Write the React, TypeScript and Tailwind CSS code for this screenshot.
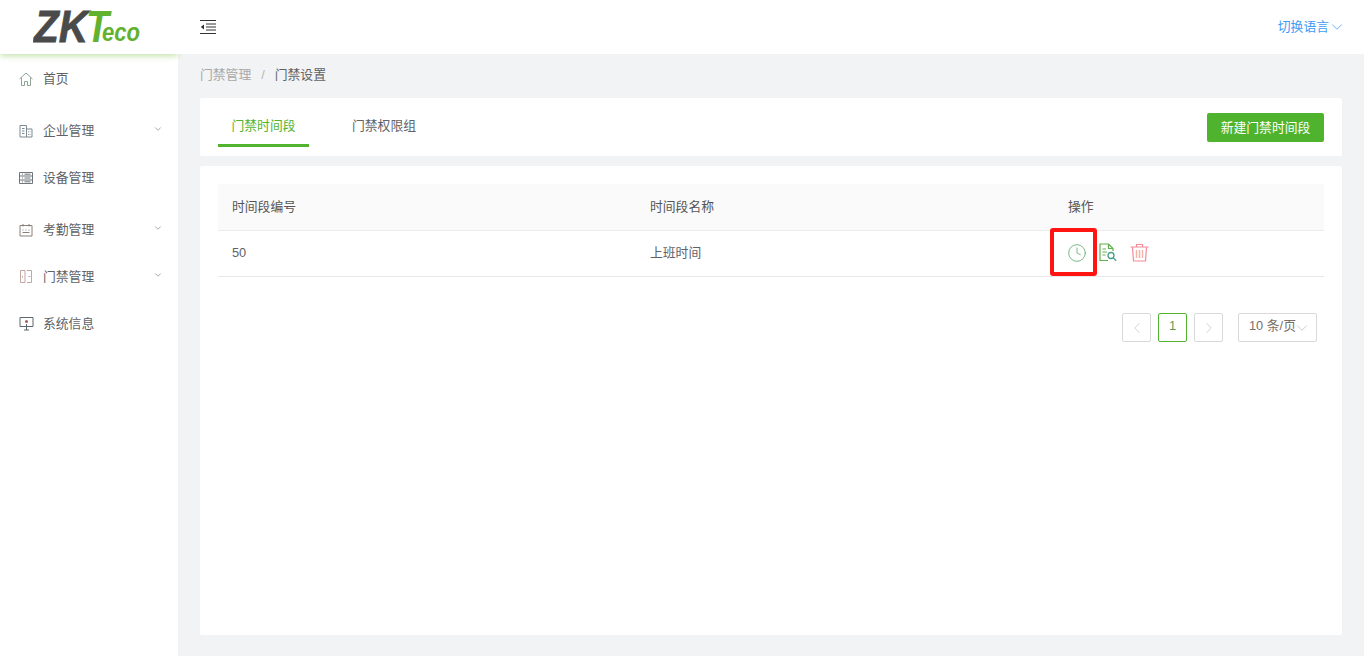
import React from 'react';
import { ChevronDown, ChevronLeft, ChevronRight, Clock } from 'lucide-react';

const FONT = "font-['Liberation_Sans','Noto_Sans_CJK_SC',sans-serif]";

function Logo() {
  return (
    <svg width="114" height="54" viewBox="0 0 114 54" className="block">
      <text fontFamily="Liberation Sans" fontWeight="700" fontStyle="italic">
        <tspan x="1" y="42" fontSize="45" fill="#4a4a4a" stroke="#4a4a4a" strokeWidth="0.8" textLength="54" lengthAdjust="spacingAndGlyphs">ZK</tspan>
        <tspan x="53" y="42" fontSize="45" fill="#63b22f" textLength="23" lengthAdjust="spacingAndGlyphs">T</tspan>
        <tspan x="69" y="41" fontSize="26" fill="#63b22f" textLength="38" lengthAdjust="spacingAndGlyphs">eco</tspan>
      </text>
    </svg>
  );
}

function HomeIcon() {
  return (
    <svg width="14" height="14" viewBox="0 0 14 14" fill="none" stroke="#8fa396" strokeWidth="1">
      <path d="M.5 7L7 1l6.500 6M2.500 5.500v8h3v-4h3v4h3v-8" />
    </svg>
  );
}

function BuildingIcon() {
  return (
    <svg width="14" height="14" viewBox="0 0 14 14" fill="none" stroke="#7d8a94" strokeWidth="1">
      <path d="M1 13V1.500h6.500V13M7.500 5H13V13H1M3 4.500h2.500M3 7h2.500M3 9.500h2.500M9.500 7.500v.8M11 7.500v.8M9.500 10v.8M11 10v.8" />
    </svg>
  );
}

function DeviceIcon() {
  return (
    <svg width="14" height="14" viewBox="0 0 14 14" fill="none" stroke="#6f7578" strokeWidth="1">
      <path d="M.5 1.500h13v11H.5zM.5 5h13M.5 9h13M3 3.200h1M3 7h1M3 10.800h1M5.500 3.200h6M5.500 7h6M5.500 10.800h6" />
    </svg>
  );
}

function CalendarIcon() {
  return (
    <svg width="14" height="14" viewBox="0 0 14 14" fill="none" stroke="#8a8078" strokeWidth="1">
      <path d="M1 2.500h12v10.500H1zM4 1v2.500M10 1v2.500M3.500 7h1M6.500 7h1M9.500 7h1M3.500 9.500h7" />
    </svg>
  );
}

function DoorIcon() {
  return (
    <svg width="14" height="15" viewBox="0 0 14 15" fill="none" stroke="#c2a7a2" strokeWidth="1">
      <path d="M6 1.500H1.500v12H6zM8 1.500h4.500v12H8M3.500 7v1.500M9.500 7.500h2" />
    </svg>
  );
}

function ScreenIcon() {
  return (
    <svg width="15" height="15" viewBox="0 0 15 15" fill="none" stroke="#5c666b" strokeWidth="1">
      <path d="M1 1.500h13v9H1zM7.500 8v6M5 14h5" />
      <circle cx="7.500" cy="5.500" r="1.500" fill="#a0605a" stroke="none" />
    </svg>
  );
}

function DocSearchIcon() {
  return (
    <svg width="18" height="19" viewBox="0 0 18 19" fill="none" strokeWidth="1.200">
      <path d="M9 17.500H1V1h8.500L14 5.500V8M9.500 1v4.500H14" stroke="#5eb04a" />
      <path d="M3.500 6h3.500M3.500 9h4.500M3.500 12h3" stroke="#5eb04a" />
      <circle cx="12" cy="12.500" r="3" stroke="#4f9c8a" strokeWidth="1.300" />
      <path d="M14.200 14.800l3 3" stroke="#4f9c8a" strokeWidth="1.300" />
    </svg>
  );
}

function TrashIcon() {
  return (
    <svg width="19" height="19" viewBox="0 0 19 19" fill="none" stroke="#f58a9b" strokeWidth="1.200">
      <path d="M.5 4h18M6.500 4V1.500h6V4M2.500 4l1 14h12l1-14" />
      <path d="M6.500 7v8M9.500 7v8M12.500 7v8" strokeWidth="1.500" stroke="#f7b4a8" />
    </svg>
  );
}

const menu = [
  { label: '首页', icon: <HomeIcon />, arrow: false, gap: '' },
  { label: '企业管理', icon: <BuildingIcon />, arrow: true, gap: 'mt-[5px]' },
  { label: '设备管理', icon: <DeviceIcon />, arrow: false, gap: '' },
  { label: '考勤管理', icon: <CalendarIcon />, arrow: true, gap: 'mt-[5px]' },
  { label: '门禁管理', icon: <DoorIcon />, arrow: true, gap: '' },
  { label: '系统信息', icon: <ScreenIcon />, arrow: false, gap: '' },
];

export default function App() {
  return (
    <div className={`flex h-[656px] w-[1364px] overflow-hidden bg-[#f2f3f5] text-[12.8px] text-[#606266] ${FONT}`}>
      <aside className="w-[178px] shrink-0 bg-white">
        <div className="flex h-[54px] items-start justify-start pl-[33px] shadow-[0_2px_6px_rgba(120,190,70,0.45)]">
          <Logo />
        </div>
        <nav className="pt-[1px]">
          {menu.map((item) => (
            <div key={item.label} className={`flex h-[47px] items-center pl-[19px] pr-[15px] ${item.gap}`}>
              <span className="flex w-[24px] shrink-0 items-center">{item.icon}</span>
              <span>{item.label}</span>
              {item.arrow && <ChevronDown size={10} strokeWidth={1.5} className="ml-auto -mt-[3px] text-[#777777]" />}
            </div>
          ))}
        </nav>
      </aside>

      <div className="flex min-w-0 flex-1 flex-col">
        <header className="flex h-[54px] shrink-0 items-center justify-between bg-white pl-[22px] pr-[18px]">
          <svg width="16" height="14" viewBox="0 0 16 14" fill="none" stroke="#333333" strokeWidth="1" className="-mt-[1px]">
            <path d="M0 .5h16M6 4h10M6 7h10M6 10h10M0 13.500h16" />
            <path d="M4 4.500v5L.8 7z" fill="#333333" stroke="none" />
          </svg>
          <div className="flex items-center text-[#3f9bf3]">
            <span>切换语言</span>
            <ChevronDown size={18} strokeWidth={1} className="-ml-[1px]" />
          </div>
        </header>

        <div className="flex h-[44px] shrink-0 items-center px-[22px] pb-[2px]">
          <span className="text-[#a8a8a8]">门禁管理</span>
          <span className="mx-[10px] text-[#b5b5b5]">/</span>
          <span className="text-[#606266]">门禁设置</span>
        </div>

        <div className="mx-[22px] flex h-[58px] shrink-0 items-start justify-between rounded-[2px] bg-white px-[18px]">
          <div className="flex h-[49px] items-stretch">
            <div className="flex w-[91px] items-center justify-center border-b-[3px] border-[#52b32e] pt-[10px] text-[#52b32e]">门禁时间段</div>
            <div className="ml-[29px] flex w-[92px] items-center justify-center border-b-[3px] border-transparent pt-[10px]">门禁权限组</div>
          </div>
          <button className="mt-[15px] h-[29px] w-[117px] rounded-[2px] bg-[#4fb32e] text-center text-white">新建门禁时间段</button>
        </div>

        <div className="relative mx-[22px] mt-[10px] h-[469px] rounded-[2px] bg-white px-[18px] pt-[18px]">
          <div className="grid h-[47px] grid-cols-[418px_418px_1fr] items-center border-b border-[#ececec] bg-[#fafafa] pl-[14px] text-[#555555]">
            <div>时间段编号</div>
            <div>时间段名称</div>
            <div>操作</div>
          </div>
          <div className="grid h-[46px] grid-cols-[418px_418px_1fr] items-center border-b border-[#e8e8e8] pb-[2px] pl-[14px]">
            <div>50</div>
            <div>上班时间</div>
            <div className="flex items-center">
              <Clock size={20} strokeWidth={1.1} color="#6fb27a" className="-ml-[1px]" />
              <span className="ml-[12px]"><DocSearchIcon /></span>
              <span className="ml-[13px]"><TrashIcon /></span>
            </div>
          </div>

          <div className="mt-[36px] flex items-center justify-end pr-[7px]">
            <div className="flex h-[29px] w-[29px] items-center justify-center rounded-[2px] border border-[#d9d9d9] text-[#c4c4c4]">
              <ChevronLeft size={18} strokeWidth={1} />
            </div>
            <div className="ml-[7px] flex h-[29px] w-[29px] items-center justify-center rounded-[2px] border border-[#52b32e] pb-[3px] text-[#5a9a5a]">1</div>
            <div className="ml-[7px] flex h-[29px] w-[29px] items-center justify-center rounded-[2px] border border-[#d9d9d9] text-[#c4c4c4]">
              <ChevronRight size={18} strokeWidth={1} />
            </div>
            <div className="ml-[15px] flex h-[29px] w-[79px] items-center rounded-[2px] border border-[#d9d9d9] pl-[10px] text-[#77706a]">
              <span className="pb-[3px]">10 条/页</span>
              <ChevronDown size={18} strokeWidth={1} className="-ml-[3px] shrink-0 text-[#bbbbbb]" />
            </div>
          </div>

          <div className="absolute left-[850px] top-[62px] h-[48px] w-[47px] rounded-[3px] border-[4px] border-[#fe1411]" />
        </div>
      </div>
    </div>
  );
}
